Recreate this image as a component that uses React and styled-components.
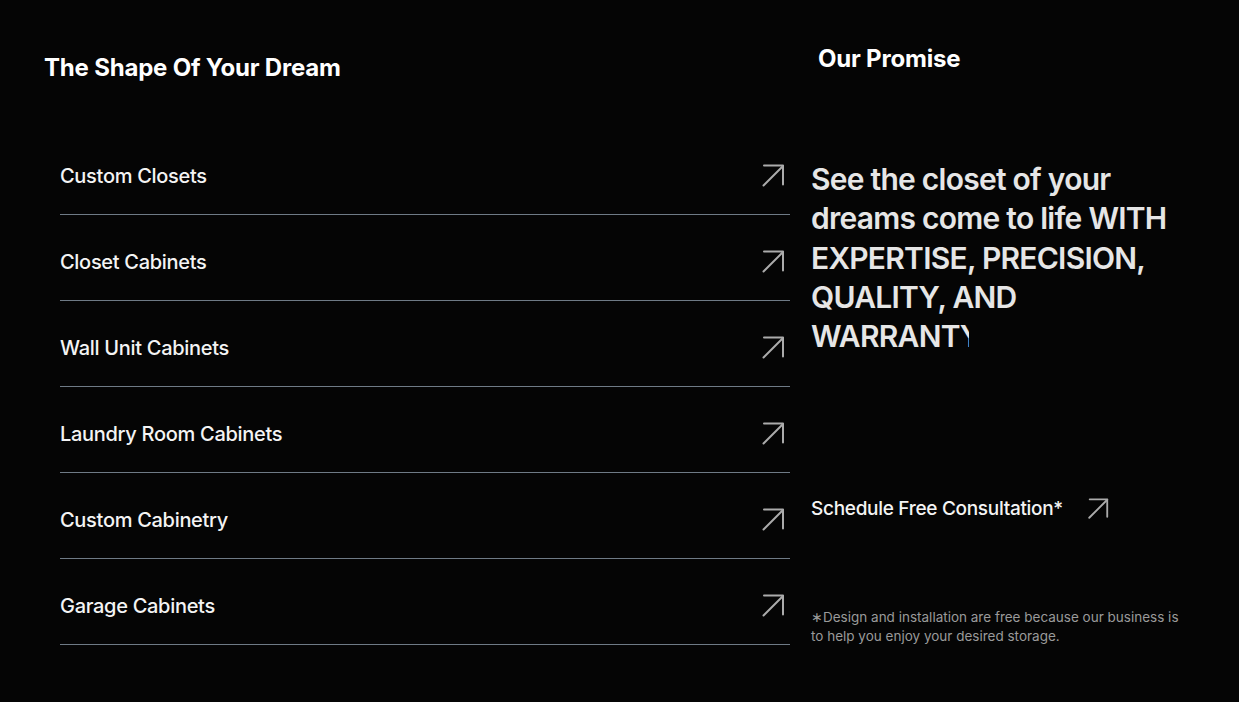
import styled, { createGlobalStyle } from 'styled-components';

const GlobalStyle = createGlobalStyle`
    html, body {
        margin: 0;
        padding: 0;
        background: #050505;
    }
    body {
        font-family: Inter, "Noto Sans", "Liberation Sans", sans-serif;
        color: #ffffff;
    }
`

const services = [
    'Custom Closets',
    'Closet Cabinets',
    'Wall Unit Cabinets',
    'Laundry Room Cabinets',
    'Custom Cabinetry',
    'Garage Cabinets',
];

const Arrow = ({ size = 26 }) => (
    <svg width={size} height={size} viewBox="0 0 26 26" fill="none">
        <path d="M3.5 22.5 L23 3" stroke="#ababab" strokeWidth="2" strokeLinecap="round" />
        <path d="M4 2.5 H23 V21.5" stroke="#ababab" strokeWidth="2" strokeLinecap="round" strokeLinejoin="round" />
    </svg>
)

const App = () => {
    return (
        <>
            <GlobalStyle />
            <Page>
                <LeftColumn>
                    <SectionTitle>The Shape Of Your Dream</SectionTitle>
                    <ServiceList>
                        {services.map((name) => (
                            <ServiceRow key={name}>
                                <span>{name}</span>
                                <Arrow />
                            </ServiceRow>
                        ))}
                    </ServiceList>
                </LeftColumn>

                <RightColumn>
                    <PromiseTitle>Our Promise</PromiseTitle>
                    <PromiseText>
                        See the closet of your dreams come to life WITH EXPERTISE, PRECISION, QUALITY, AND{' '}
                        <NoWrap>WARRANT<Cut>Y</Cut></NoWrap>
                    </PromiseText>
                    <ConsultLink>
                        <span>Schedule Free Consultation*</span>
                        <Arrow size={24} />
                    </ConsultLink>
                    <Footnote>∗Design and installation are free because our business is to help you enjoy your desired storage.</Footnote>
                </RightColumn>
            </Page>
        </>
    )
}

export default App;

const Page = styled.main`
    display: grid;
    grid-template-columns: 746px 1fr;
    column-gap: 21px;
    padding-left: 44px;
    height: 702px;
    box-sizing: border-box;
`

const LeftColumn = styled.section`
    display: flex;
    flex-direction: column;
`

const SectionTitle = styled.h2`
    margin: 53px 0 0 0;
    font-size: 24px;
    line-height: 30px;
    font-weight: 700;
    letter-spacing: -0.2px;
    color: #ffffff;
`

const ServiceList = styled.ul`
    list-style: none;
    margin: 46px 0 0 16px;
    padding: 0;
`

const ServiceRow = styled.li`
    display: flex;
    justify-content: space-between;
    align-items: center;
    height: 86px;
    box-sizing: border-box;
    padding: 9px 4px 0 0;
    border-bottom: 1px solid #6f7a86;
    font-size: 20px;
    font-weight: 500;
    letter-spacing: -0.3px;
    color: #f4f4f4;
`

const RightColumn = styled.section`
    display: flex;
    flex-direction: column;
`

const PromiseTitle = styled.h2`
    margin: 44px 0 0 7px;
    font-size: 24px;
    line-height: 30px;
    font-weight: 700;
    letter-spacing: -0.2px;
    color: #ffffff;
`

const PromiseText = styled.p`
    margin: 86px 0 0 0;
    width: 370px;
    font-size: 30px;
    line-height: 39.3px;
    font-weight: 600;
    letter-spacing: -0.75px;
    color: #e6e6e6;
`

const NoWrap = styled.span`
    white-space: nowrap;
`

const Cut = styled.span`
    display: inline-block;
    width: 9px;
    overflow: hidden;
    vertical-align: bottom;
`

const ConsultLink = styled.a`
    display: flex;
    align-items: center;
    gap: 23px;
    margin-top: 140px;
    font-size: 19px;
    line-height: 26px;
    font-weight: 500;
    color: #f4f4f4;
    letter-spacing: -0.3px;
`

const Footnote = styled.p`
    margin: 86px 0 0 0;
    width: 370px;
    font-size: 13.5px;
    line-height: 19px;
    color: #9a9a9a;
`
